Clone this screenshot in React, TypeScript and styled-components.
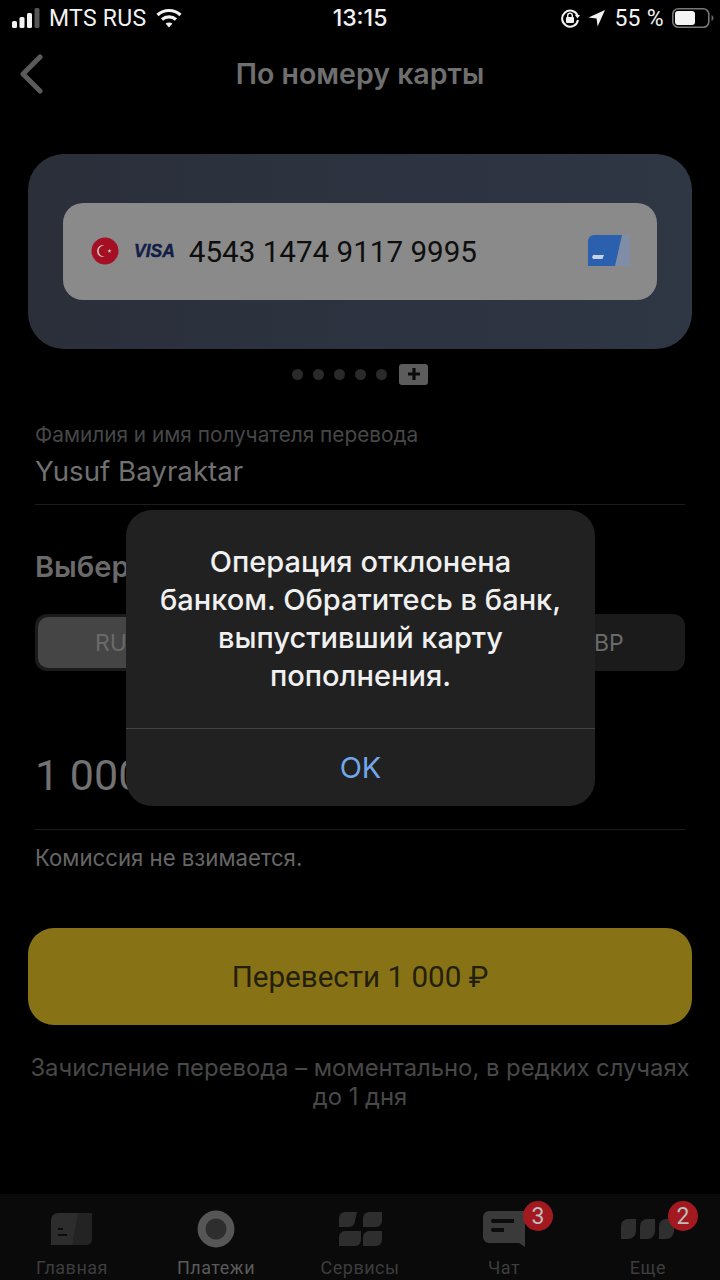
import styled, { createGlobalStyle } from "styled-components";

const GlobalStyle = createGlobalStyle`
  html, body {
    margin: 0;
    padding: 0;
    background: #000;
  }
  * {
    box-sizing: border-box;
  }
`;

const tabs = [
  { label: "Главная", icon: <HomeIcon /> },
  { label: "Платежи", icon: <PayIcon />, active: true },
  { label: "Сервисы", icon: <ServicesIcon /> },
  { label: "Чат", icon: <ChatIcon />, badge: 3, badgeRight: -28 },
  { label: "Еще", icon: <MoreIcon />, badge: 2, badgeRight: -23 },
];

export default function App() {
  return (
    <Screen>
      <GlobalStyle />
      <StatusBar>
        <StatusSide>
          <SignalIcon />
          <Carrier>MTS RUS</Carrier>
          <WifiIcon />
        </StatusSide>
        <Clock>13:15</Clock>
        <StatusSide $right>
          <LockIcon />
          <LocationIcon />
          <Carrier>55 %</Carrier>
          <BatteryIcon />
        </StatusSide>
      </StatusBar>

      <NavBar>
        <BackButton>
          <svg width="26" height="40" viewBox="0 0 26 40" fill="none">
            <path d="M22 3 5 20l17 17" stroke="#5b5b5b" strokeWidth="5" strokeLinecap="round" strokeLinejoin="round" />
          </svg>
        </BackButton>
        <Title>По номеру карты</Title>
      </NavBar>

      <CardPanel>
        <CardRow>
          <FlagIcon />
          <VisaMark>VISA</VisaMark>
          <CardNumber>4543 1474 9117 9995</CardNumber>
          <BankCardIcon />
        </CardRow>
      </CardPanel>

      <Pager>
        <PagerDot />
        <PagerDot />
        <PagerDot />
        <PagerDot />
        <PagerDot />
        <PagerPlus>
          <svg width="14" height="14" viewBox="0 0 14 14">
            <path d="M7 1v12M1 7h12" stroke="#0b0b0b" strokeWidth="3.2" />
          </svg>
        </PagerPlus>
      </Pager>

      <Field>
        <FieldLabel>Фамилия и имя получателя перевода</FieldLabel>
        <FieldValue>Yusuf Bayraktar</FieldValue>
      </Field>

      <SectionTitle>Выберите валюту</SectionTitle>
      <Segments>
        <Segment $active>RUB</Segment>
        <Segment>USD</Segment>
        <Segment>EUR</Segment>
        <Segment>SBP</Segment>
      </Segments>

      <Amount>1 000 ₽</Amount>
      <Fee>Комиссия не взимается.</Fee>

      <SubmitButton>Перевести 1 000 ₽</SubmitButton>
      <Note>
        Зачисление перевода – моментально, в редких случаях
        <br />
        до 1 дня
      </Note>

      <TabBar>
        {tabs.map((tab) => (
          <Tab key={tab.label}>
            <TabIcon>
              {tab.icon}
              {tab.badge && <Badge $right={tab.badgeRight}>{tab.badge}</Badge>}
            </TabIcon>
            <TabLabel $active={tab.active}>{tab.label}</TabLabel>
          </Tab>
        ))}
      </TabBar>

      <Dialog>
        <DialogText>
          Операция отклонена
          <br />
          банком. Обратитесь в банк,
          <br />
          выпустивший карту
          <br />
          пополнения.
        </DialogText>
        <DialogButton>OK</DialogButton>
      </Dialog>
    </Screen>
  );
}

function SignalIcon() {
  return (
    <svg width="28" height="20" viewBox="0 0 28 20">
      <rect x="0" y="13" width="5" height="7" rx="1.5" fill="#f2f2f2" />
      <rect x="7.5" y="9" width="5" height="11" rx="1.5" fill="#f2f2f2" />
      <rect x="15" y="5" width="5" height="15" rx="1.5" fill="#f2f2f2" />
      <rect x="22.5" y="0" width="5" height="20" rx="1.5" fill="#555" />
    </svg>
  );
}

function WifiIcon() {
  return (
    <svg width="26" height="20" viewBox="0 0 26 20" fill="none" stroke="#f2f2f2" strokeWidth="3.2">
      <path d="M1.5 7C8 1 18 1 24.5 7" />
      <path d="M6 11.5c4-3.6 10-3.6 14 0" />
      <path d="M13 19.5 9.6 15.6c2-1.6 4.8-1.6 6.8 0z" fill="#f2f2f2" stroke="none" />
    </svg>
  );
}

function LockIcon() {
  return (
    <svg width="20" height="20" viewBox="0 0 20 20" fill="none">
      <path d="M17.5 7.5A8 8 0 1 0 18 12" stroke="#f2f2f2" strokeWidth="2" />
      <path d="M15 7h5l-2.5 3.4z" fill="#f2f2f2" />
      <rect x="6" y="9" width="8" height="6" rx="1" fill="#f2f2f2" />
      <path d="M7.7 9V7.4a2.3 2.3 0 0 1 4.6 0V9" stroke="#f2f2f2" strokeWidth="1.4" />
    </svg>
  );
}

function LocationIcon() {
  return (
    <svg width="18" height="18" viewBox="0 0 18 18">
      <path d="M17 1 0.5 8.6 8.6 9.4 9.6 17.5z" fill="#f2f2f2" />
    </svg>
  );
}

function BatteryIcon() {
  return (
    <svg width="42" height="20" viewBox="0 0 42 20" fill="none">
      <rect x="0.8" y="0.8" width="36" height="18.4" rx="5.5" stroke="#777" strokeWidth="1.6" />
      <rect x="3" y="3" width="20" height="14" rx="3" fill="#f4f4f4" />
      <path d="M39.5 7v6c1.2-.5 2-1.7 2-3s-.8-2.5-2-3z" fill="#666" />
    </svg>
  );
}

function FlagIcon() {
  return (
    <svg width="28" height="28" viewBox="0 0 28 28">
      <circle cx="14" cy="14" r="13.5" fill="#a50f24" />
      <path d="M13.5 8.2a6 6 0 1 0 0 11.6 4.8 4.8 0 1 1 0-11.6z" fill="#c9c2c2" />
      <path d="m18.5 11.8.5 1.5 1.6 0-1.3 1 .5 1.5-1.3-.9-1.3.9.5-1.5-1.3-1 1.6 0z" fill="#c9c2c2" />
    </svg>
  );
}

function BankCardIcon() {
  return (
    <svg width="44" height="34" viewBox="0 0 44 34">
      <path d="M8 1h35v31H8z" fill="#7f8ea6" />
      <path d="M7 1h28l-7 31H1V7a6 6 0 0 1 6-6z" fill="#2a60ad" />
      <path d="M8.5 21H17l-1.6 4H6.5a2 2 0 0 1 2-4z" fill="#c5d3e6" />
    </svg>
  );
}

function HomeIcon() {
  return (
    <svg width="42" height="32" viewBox="0 0 42 32">
      <path d="M7 0h34v26a6 6 0 0 1-6 6H0V7a7 7 0 0 1 7-7z" fill="#2d2d2d" />
      <path d="M27 0h14v26a6 6 0 0 1-6 6H21z" fill="#232323" />
      <path d="M7 15h5v2H7zM7 21h9v2H7z" fill="#0c0c0c" />
    </svg>
  );
}

function PayIcon() {
  return (
    <svg width="38" height="38" viewBox="0 0 38 38">
      <circle cx="19" cy="19" r="18.5" fill="#565656" />
      <circle cx="19" cy="19" r="10.5" fill="#2e2e2e" />
    </svg>
  );
}

function ServicesIcon() {
  return (
    <svg width="44" height="34" viewBox="0 0 44 34" fill="#2e2e2e">
      <path d="M7 0h12l-2 9a6 6 0 0 1-6 6H1V6a6 6 0 0 1 6-6z" />
      <path d="M31 0h13v9a6 6 0 0 1-6 6H25V6a6 6 0 0 1 6-6z" />
      <path d="M7 19h16v9a6 6 0 0 1-6 6H1v-9a6 6 0 0 1 6-6z" />
      <path d="M31 19h13v9a6 6 0 0 1-6 6H25v-9a6 6 0 0 1 6-6z" />
    </svg>
  );
}

function ChatIcon() {
  return (
    <svg width="42" height="36" viewBox="0 0 42 36">
      <path d="M6 0h36v36l-6-4H6a6 6 0 0 1-6-6V6a6 6 0 0 1 6-6z" fill="#3a3a3a" />
      <path d="M11 8h20v4H9.5a2 2 0 0 1 1.5-4zM11 17h10v4H9.5a2 2 0 0 1 1.5-4z" fill="#0c0c0c" />
    </svg>
  );
}

function MoreIcon() {
  return (
    <svg width="54" height="22" viewBox="0 0 54 22" fill="#2f2f2f">
      <path d="M7 1h8v12a8 8 0 0 1-8 8H0V8a7 7 0 0 1 7-7z" />
      <path d="M26 1h8v12a8 8 0 0 1-8 8h-7V8a7 7 0 0 1 7-7z" />
      <path d="M45 1h8v12a8 8 0 0 1-8 8h-7V8a7 7 0 0 1 7-7z" />
    </svg>
  );
}

const Screen = styled.div`
  position: relative;
  display: flex;
  flex-direction: column;
  width: 720px;
  height: 1280px;
  overflow: hidden;
  background: #000;
  font-family: Inter, Roboto, "Liberation Sans", sans-serif;
`;

const StatusBar = styled.div`
  display: grid;
  grid-template-columns: 1fr auto 1fr;
  align-items: center;
  height: 36px;
  padding: 0 6px;
  color: #f2f2f2;
`;

const StatusSide = styled.div<{ $right?: boolean }>`
  display: flex;
  align-items: center;
  gap: ${(p) => (p.$right ? "8px" : "9px")};
  justify-content: ${(p) => (p.$right ? "flex-end" : "flex-start")};
  padding-left: ${(p) => (p.$right ? "0" : "6px")};
`;

const Carrier = styled.span`
  font-family: Roboto, sans-serif;
  font-size: 23px;
  letter-spacing: 0.3px;
`;

const Clock = styled.span`
  font-size: 23px;
  font-weight: 500;
`;

const NavBar = styled.div`
  position: relative;
  display: flex;
  align-items: center;
  justify-content: center;
  height: 76px;
`;

const BackButton = styled.div`
  position: absolute;
  left: 18px;
  top: 18px;
  line-height: 0;
`;

const Title = styled.h1`
  margin: 0;
  color: #6f6f6f;
  font-size: 28.5px;
  font-weight: 600;
  line-height: 74px;
`;

const CardPanel = styled.div`
  display: flex;
  align-items: center;
  height: 195px;
  margin: 42px 28px 0;
  padding: 0 35px 1px;
  border-radius: 36px;
  background: linear-gradient(90deg, #2a2f3a, #2f3644);
`;

const CardRow = styled.div`
  display: flex;
  align-items: center;
  width: 100%;
  height: 97px;
  padding: 0 26px 0 28px;
  border-radius: 20px;
  background: #8a8a8a;
`;

const VisaMark = styled.span`
  margin-left: 15px;
  color: #121d48;
  font-family: "Liberation Sans", sans-serif;
  font-size: 17.5px;
  font-style: italic;
  font-weight: 700;
  -webkit-text-stroke: 0.4px #121d48;
`;

const CardNumber = styled.span`
  flex: 1;
  margin-left: 14px;
  padding-top: 2px;
  color: #0e0e0e;
  font-family: Roboto, sans-serif;
  font-size: 29.6px;
`;

const Pager = styled.div`
  display: flex;
  align-items: center;
  justify-content: center;
  gap: 10px;
  height: 30px;
  margin-top: 10px;
  padding-left: 0;
`;

const PagerDot = styled.span`
  width: 11px;
  height: 11px;
  border-radius: 50%;
  background: #2a2a2a;
`;

const PagerPlus = styled.span`
  display: flex;
  align-items: center;
  justify-content: center;
  width: 29px;
  height: 21px;
  margin-left: 2px;
  border-radius: 3px;
  background: #5c5c5c;
`;

const Field = styled.div`
  display: flex;
  flex-direction: column;
  height: 116px;
  margin: 0 35px;
  padding-top: 34px;
  border-bottom: 1px solid #1c1c1c;
`;

const FieldLabel = styled.span`
  color: #474747;
  font-size: 20.8px;
  line-height: 24px;
`;

const FieldValue = styled.span`
  margin-top: 6px;
  color: #717171;
  font-size: 27.7px;
  line-height: 36px;
`;

const SectionTitle = styled.h2`
  margin: 43px 35px 0;
  color: #6a6a6a;
  font-size: 29px;
  font-weight: 600;
  line-height: 38px;
`;

const Segments = styled.div`
  display: grid;
  grid-template-columns: repeat(4, 1fr);
  height: 57px;
  margin: 28px 35px 0;
  padding: 3px;
  border-radius: 12px;
  background: #1b1b1b;
`;

const Segment = styled.div<{ $active?: boolean }>`
  display: flex;
  align-items: center;
  justify-content: center;
  border-radius: 10px;
  background: ${(p) => (p.$active ? "#454545" : "transparent")};
  color: #6a6a6a;
  font-size: 23px;
`;

const Amount = styled.div`
  height: 82px;
  margin: 76px 35px 0;
  padding-top: 2px;
  color: #727272;
  font-family: Roboto, sans-serif;
  font-size: 43px;
  line-height: 52px;
  box-shadow: 0 1px 0 #1c1c1c;
`;

const Fee = styled.div`
  margin: 15px 35px 0;
  color: #666;
  font-size: 22.2px;
  line-height: 28px;
`;

const SubmitButton = styled.button`
  height: 97px;
  margin: 56px 28px 0;
  border: 0;
  border-radius: 26px;
  background: #877215;
  color: #231f0c;
  font-family: Roboto, sans-serif;
  font-size: 29.6px;
`;

const Note = styled.div`
  margin: 28px 28px 0;
  color: #484848;
  font-size: 23.8px;
  line-height: 29px;
  text-align: center;
  white-space: nowrap;
`;

const TabBar = styled.div`
  display: grid;
  grid-template-columns: repeat(5, 1fr);
  height: 86px;
  margin-top: auto;
  background: #0a0a0a;
`;

const Tab = styled.div`
  display: flex;
  flex-direction: column;
  align-items: center;
`;

const TabIcon = styled.div`
  position: relative;
  display: flex;
  align-items: center;
  justify-content: center;
  height: 44px;
  margin-top: 13px;
`;

const Badge = styled.span<{ $right?: number }>`
  position: absolute;
  top: -6px;
  right: ${(p) => p.$right}px;
  display: flex;
  align-items: center;
  justify-content: center;
  width: 30px;
  height: 30px;
  border-radius: 50%;
  background: #a21a20;
  color: #bdbdbd;
  font-family: Roboto, sans-serif;
  font-size: 23px;
`;

const TabLabel = styled.span<{ $active?: boolean }>`
  margin-top: 5px;
  color: ${(p) => (p.$active ? "#5a5a5a" : "#3d3d3d")};
  font-family: Roboto, sans-serif;
  font-size: 18px;
  letter-spacing: 0.5px;
  line-height: 24px;
`;

const Dialog = styled.div`
  position: absolute;
  left: 126px;
  top: 510px;
  display: flex;
  flex-direction: column;
  width: 469px;
  height: 296px;
  border-radius: 26px;
  background: #212121;
`;

const DialogText = styled.div`
  display: flex;
  align-items: center;
  justify-content: center;
  height: 219px;
  border-bottom: 1px solid #444;
  color: #f0f0f0;
  font-size: 29px;
  font-weight: 500;
  line-height: 38px;
  text-align: center;
`;

const DialogButton = styled.div`
  flex: 1;
  display: flex;
  align-items: center;
  justify-content: center;
  color: #72a7ea;
  font-size: 29px;
`;
